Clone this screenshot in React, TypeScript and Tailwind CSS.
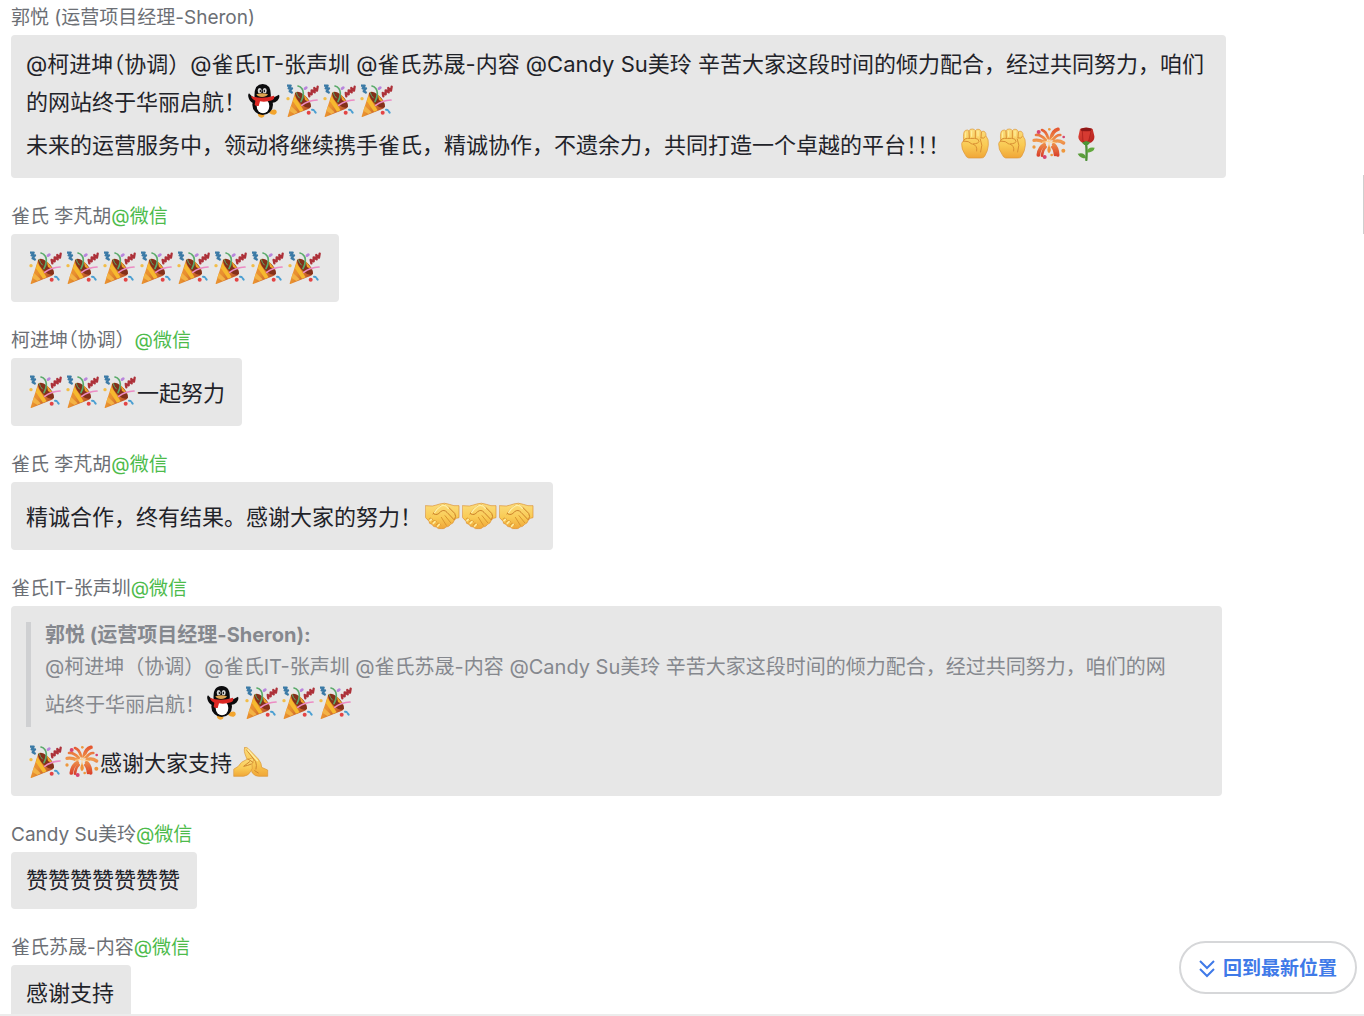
import type { ReactNode } from "react";

function Gradients() {
  return (
    <svg className="absolute h-0 w-0" aria-hidden="true">
      <defs>
        <linearGradient id="cone" x1="0" y1="0.2" x2="1" y2="0.8">
          <stop offset="0" stopColor="#ee9538" />
          <stop offset="0.4" stopColor="#e8902f" />
          <stop offset="0.8" stopColor="#c25a2a" />
          <stop offset="1" stopColor="#a8431f" />
        </linearGradient>
        <linearGradient id="skin" x1="0" y1="0" x2="0" y2="1">
          <stop offset="0" stopColor="#fbdc7c" />
          <stop offset="0.55" stopColor="#f9cb55" />
          <stop offset="1" stopColor="#f0a637" />
        </linearGradient>
        <linearGradient id="spark" gradientUnits="userSpaceOnUse" x1="0" y1="5" x2="0" y2="90">
          <stop offset="0" stopColor="#e4552f" />
          <stop offset="0.45" stopColor="#f09a4e" />
          <stop offset="1" stopColor="#d83a28" />
        </linearGradient>
        <linearGradient id="petal" x1="0" y1="0" x2="1" y2="1">
          <stop offset="0" stopColor="#e2483a" />
          <stop offset="1" stopColor="#b31f1c" />
        </linearGradient>
      </defs>
    </svg>
  );
}

function Emoji({ label, children }: { label: string; children: ReactNode }) {
  return (
    <svg
      role="img"
      aria-label={label}
      viewBox="0 0 111 102"
      className="inline-block h-[34px] w-[37px] align-[-8px]"
      fill="none"
      strokeLinecap="round"
      strokeLinejoin="round"
    >
      {children}
    </svg>
  );
}

function Party() {
  return (
    <Emoji label="庆祝">
      <path d="M14 97 L36 27 Q40 20 50 26 Q78 44 83 66 Q83 73 76 75 L18 98 Q13 100 14 97Z" fill="url(#cone)" />
      <path d="M24 66 L44 85 L34 90 L19 80Z" fill="#f3b245" />
      <path d="M34 36 L62 79 L51 83 L30 52Z" fill="#f6b92f" />
      <path d="M36 28 Q44 17 63 32 Q85 51 84 68 Q75 77 57 63 Q37 46 36 28Z" fill="#84301a" />
      <path d="M62 30 L82 56 L66 48Z" fill="#f0a52a" />
      <path d="M45 6 Q60 10 61 27 Q61 42 54 53" stroke="#5bab6b" strokeWidth="5" />
      <path d="M40 26 Q41 34 49 42" stroke="#5bab6b" strokeWidth="3" />
      <path d="M56 64 Q76 49 102 48" stroke="#ec8bc3" strokeWidth="5" />
      <path d="M12 5 H23 L17 13 H27 L20 22 L29 27" stroke="#3b7aa6" strokeWidth="7" strokeLinecap="butt" />
      <path d="M79 37 L77 27 M77 27 L86 31 L86 19 L95 25 L94 12 L102 20 L104 8" stroke="#ad3139" strokeWidth="7" />
      <path d="M66 14 L70 11" stroke="#b985dd" strokeWidth="8" />
      <circle cx="15" cy="44" r="5" fill="#f2bd48" />
      <circle cx="77" cy="86" r="6" fill="#e34444" />
      <path d="M87 77 L92 78 M95 82 L98 86" stroke="#4b9fd2" strokeWidth="6" />
    </Emoji>
  );
}

function Penguin() {
  return (
    <Emoji label="企鹅">
      <path d="M36 86 Q34 100 47 101 Q56 100 55 93 L48 87Z" fill="#f3a52e" />
      <path d="M70 84 Q80 74 90 78 Q96 88 86 92 Q76 93 70 87Z" fill="#f3a52e" />
      <path d="M27 43 Q15 36 9 28 Q4 33 9 45 Q15 57 24 57Z" fill="#0b0b0d" />
      <path d="M73 41 Q88 40 99 32 Q103 39 94 50 Q86 58 76 56Z" fill="#0b0b0d" />
      <ellipse cx="50" cy="62" rx="31" ry="31" fill="#0b0b0d" />
      <path d="M26 43 Q22 0 50 0 Q78 0 74 43Z" fill="#0b0b0d" />
      <ellipse cx="51" cy="66" rx="19" ry="22" fill="#fff" />
      <ellipse cx="41" cy="20" rx="6" ry="8" fill="#d6d6d6" />
      <ellipse cx="56" cy="20" rx="6" ry="8" fill="#d6d6d6" />
      <ellipse cx="43" cy="21" rx="2" ry="4" fill="#111" />
      <ellipse cx="55" cy="21" rx="2" ry="4" fill="#111" />
      <path d="M31 31 Q49 25 66 31 Q61 39 48 39 Q36 39 31 31Z" fill="#dfa550" />
      <path d="M15 36 Q48 47 84 35 Q88 44 78 49 Q59 55 42 52 L38 66 Q30 67 26 63 L28 50 Q17 46 15 36Z" fill="#dc2824" />
    </Emoji>
  );
}

function Fist() {
  return (
    <Emoji label="加油">
      <path
        d="M23 42 Q20 12 29 10 Q35 7 39 12 Q41 5 49 6 Q56 6 58 11 Q62 5 69 7 Q75 9 76 15 Q81 10 86 14 Q91 18 90 27 Q99 36 97 55 Q96 71 86 88 Q83 94 73 93 H38 Q31 92 27 82 Q16 67 17 50 Q18 43 23 42Z"
        fill="url(#skin)"
        stroke="#dc9638"
        strokeWidth="2"
      />
      <path d="M39 13 L40 32 M58 12 V32 M76 16 L75 32 M23 40 Q26 34 35 34 Q42 35 56 34 Q68 34 69 43 Q68 50 50 51 Q65 56 62 72 M22 42 Q39 41 48 51 M75 33 Q84 36 88 29 M73 36 Q82 54 74 75" stroke="#d98f33" strokeWidth="3" />
      <path d="M29 17 V31 M47 12 V28 M66 13 V27" stroke="#fff0a3" strokeWidth="3" />
    </Emoji>
  );
}

function Fireworks() {
  return (
    <Emoji label="烟花">
      <g stroke="url(#spark)" strokeWidth="8">
        <path d="M54 34 Q49 13 36 9" />
        <path d="M63 35 Q68 11 84 7" strokeWidth="11" />
        <path d="M47 39 Q32 22 18 24" />
        <path d="M70 37 Q80 23 91 24" />
        <path d="M42 45 Q26 37 12 40" strokeWidth="10" />
        <path d="M72 44 Q86 38 101 48" strokeWidth="10" />
        <path d="M43 54 Q28 60 25 84" strokeWidth="11" />
        <path d="M71 53 Q82 62 83 84" strokeWidth="11" />
        <path d="M47 60 Q38 68 36 86" />
        <path d="M67 60 Q74 67 75 84" />
      </g>
      <path d="M57 52 Q68 72 57 79 Q47 73 57 52Z" fill="#ef943a" />
      <path d="M57 43 L46 29 M58 43 L70 29 M56 43 L37 46 M57 44 L77 48 M57 43 V58" stroke="#ffd494" strokeWidth="3" />
      <g fill="#d64370">
        <circle cx="26" cy="15" r="6" />
        <circle cx="101" cy="30" r="4" />
        <circle cx="44" cy="90" r="6" />
      </g>
      <g fill="#ee983d">
        <circle cx="58" cy="7" r="4" />
        <circle cx="12" cy="60" r="5" />
        <circle cx="65" cy="84" r="4" />
        <circle cx="100" cy="71" r="6" />
      </g>
    </Emoji>
  );
}

function Rose() {
  return (
    <Emoji label="玫瑰">
      <path d="M57 46 Q60 73 58 99" stroke="#4e9138" strokeWidth="7" />
      <path d="M59 75 Q62 58 83 62 Q81 76 59 77Z" fill="#61a83c" />
      <path d="M57 91 Q52 74 32 80 Q39 94 57 94Z" fill="#5b9d3b" />
      <path d="M39 6 Q57 -3 77 6 L82 27 Q84 43 67 49 Q57 53 46 47 Q34 40 34 29Z" fill="url(#petal)" />
      <path d="M41 5 Q57 -1 75 5 L70 13 Q56 17 43 12Z" fill="#8d1717" />
      <path d="M46 13 L48 43 Q55 48 65 42 L72 13" fill="#d63a31" stroke="#a31b1a" strokeWidth="2" />
      <path d="M45 47 L57 42 L70 46 L63 54 H52Z" fill="#4c9538" />
    </Emoji>
  );
}

function Handshake() {
  return (
    <Emoji label="握手">
      <path
        d="M2 20 L22 21 Q32 19 44 15 Q58 10 73 16 Q86 22 102 20 V56 Q94 56 88 63 Q86 73 77 76 Q72 84 63 84 Q58 91 49 89 Q38 91 34 84 Q24 85 21 76 Q11 75 12 66 Q5 61 2 56Z"
        fill="url(#skin)"
        stroke="#dc9030"
        strokeWidth="2"
      />
      <path d="M24 45 Q32 30 46 21 Q60 14 70 24 L89 43 Q95 52 89 61 M27 45 Q36 51 47 38 Q57 30 66 40 L87 62" stroke="#cb812a" strokeWidth="3" />
      <path d="M60 50 L77 71 M49 55 L64 79 M12 60 Q17 53 23 61 M22 69 Q28 59 35 69 M34 78 Q40 67 47 78" stroke="#d9952f" strokeWidth="3" />
      <path d="M29 40 Q42 21 54 19 Q65 18 70 28" stroke="#fff0a5" strokeWidth="4" />
      <path d="M15 65 L19 61 M25 73 L30 68 M38 82 L43 76" stroke="#ffeb9b" strokeWidth="5" />
    </Emoji>
  );
}

function Palms() {
  return (
    <Emoji label="合十">
      <path
        d="M38 8 Q44 5 49 11 L79 42 Q89 54 89 67 L107 75 V94 H80 Q69 94 61 84 L42 35 Q34 17 38 8Z"
        fill="url(#skin)"
        stroke="#db9637"
        strokeWidth="2"
      />
      <path
        d="M6 72 L19 64 Q26 50 43 44 L61 39 Q68 41 63 50 L60 58 Q64 71 55 81 Q49 92 35 94 H6Z"
        fill="url(#skin)"
        stroke="#db9637"
        strokeWidth="2"
      />
      <path d="M44 15 L71 50 Q75 61 72 72 M53 50 L35 64 Q47 62 58 57 M68 77 L79 84 M48 42 L63 52" stroke="#cf872f" strokeWidth="3" />
      <path d="M48 15 L76 47" stroke="#fff0a5" strokeWidth="4" />
    </Emoji>
  );
}

function HalfWidth({ children }: { children: ReactNode }) {
  return <span className="[font-feature-settings:'halt']">{children}</span>;
}

function Message({
  name,
  wechat = true,
  className,
  children,
}: {
  name: ReactNode;
  wechat?: boolean;
  className: string;
  children: ReactNode;
}) {
  return (
    <article className="flex flex-col items-start gap-[5px]">
      <h2 className="text-[19px] leading-6 text-[#6c6f75]">
        {name}
        {wechat && <span className="text-[#4dbb4b]">@微信</span>}
      </h2>
      <div className={`max-w-full rounded-[4px] bg-[#e7e7e7] pr-[17px] pl-[15px] text-[22px] text-[#1f2329] ${className}`}>
        {children}
      </div>
    </article>
  );
}

export default function App() {
  return (
    <main className="relative flex h-screen flex-col overflow-hidden bg-white font-['Inter','Noto_Sans_CJK_SC',sans-serif]">
      <Gradients />
      <section className="flex min-h-0 flex-1 flex-col gap-[27px] overflow-hidden pt-1.5 pr-[138px] pl-[11px]">
        <Message name="郭悦 (运营项目经理-Sheron)" wechat={false} className="pt-2.5 pb-3.5 leading-[38px]">
          <p>
            <HalfWidth>@柯进坤（协调</HalfWidth>）@雀氏IT-张声圳 @雀氏苏晟-内容 @Candy Su美玲 辛苦大家这段时间的倾力配合，经过共同努力，咱们的网站终于华丽启航！
            <Penguin />
            <Party />
            <Party />
            <Party />
          </p>
          <p className="mt-[5px]">
            未来的运营服务中，领动将继续携手雀氏，精诚协作，不遗余力，共同打造一个卓越的平台
            <HalfWidth>！！</HalfWidth>！{" "}
            <Fist />
            <Fist />
            <Fireworks />
            <Rose />
          </p>
        </Message>

        <Message name="雀氏 李芃胡" className="pt-4 pb-3.5 leading-[38px]">
          <p>
            <Party />
            <Party />
            <Party />
            <Party />
            <Party />
            <Party />
            <Party />
            <Party />
          </p>
        </Message>

        <Message
          name={
            <>
              <HalfWidth>柯进坤（协调</HalfWidth>）
            </>
          }
          className="pt-4 pb-3.5 leading-[38px]"
        >
          <p>
            <Party />
            <Party />
            <Party />
            一起努力
          </p>
        </Message>

        <Message name="雀氏 李芃胡" className="pt-4 pb-3.5 leading-[38px]">
          <p>
            精诚合作，终有结果。感谢大家的努力！
            <span className="ml-[3px]">
              <Handshake />
              <Handshake />
              <Handshake />
            </span>
          </p>
        </Message>

        <Message name="雀氏IT-张声圳" className="mr-1 pt-4 pb-3.5 leading-[38px]">
          <blockquote className="border-l-[5px] border-[#cfd0d2] pr-6 pb-[3px] pl-3.5 text-[20px] text-[#85888e]">
            <p className="leading-[26px] font-bold">郭悦 (运营项目经理-Sheron):</p>
            <p>
              @柯进坤（协调）@雀氏IT-张声圳 @雀氏苏晟-内容 @Candy Su美玲 辛苦大家这段时间的倾力配合，经过共同努力，咱们的网站终于华丽启航！
              <Penguin />
              <Party />
              <Party />
              <Party />
            </p>
          </blockquote>
          <p className="mt-[17px]">
            <Party />
            <Fireworks />
            感谢大家支持
            <Palms />
          </p>
        </Message>

        <Message name="Candy Su美玲" className="py-[15px] leading-[27px]">
          <p>赞赞赞赞赞赞赞</p>
        </Message>

        <Message name="雀氏苏晟-内容" className="py-[15px] leading-[27px]">
          <p>感谢支持</p>
        </Message>
      </section>
      <div className="h-0.5 shrink-0 bg-[#ececec]" />
      <div className="absolute top-[175px] right-0 h-[59px] w-px bg-[#cfcfcf]" />
      <button
        type="button"
        className="absolute right-[7px] bottom-[22px] flex h-[53px] items-center gap-2 rounded-full border-2 border-[#d6d7d9] bg-white px-[18px] pt-[3px] text-[19px] font-bold text-[#3f7ae8]"
      >
        <svg viewBox="0 0 16 18" className="h-[18px] w-4" fill="none" stroke="#3f7ae8" strokeWidth="2" aria-hidden="true">
          <path d="M1 1 L8 8 L15 1 M1 9 L8 16 L15 9" />
        </svg>
        回到最新位置
      </button>
    </main>
  );
}
